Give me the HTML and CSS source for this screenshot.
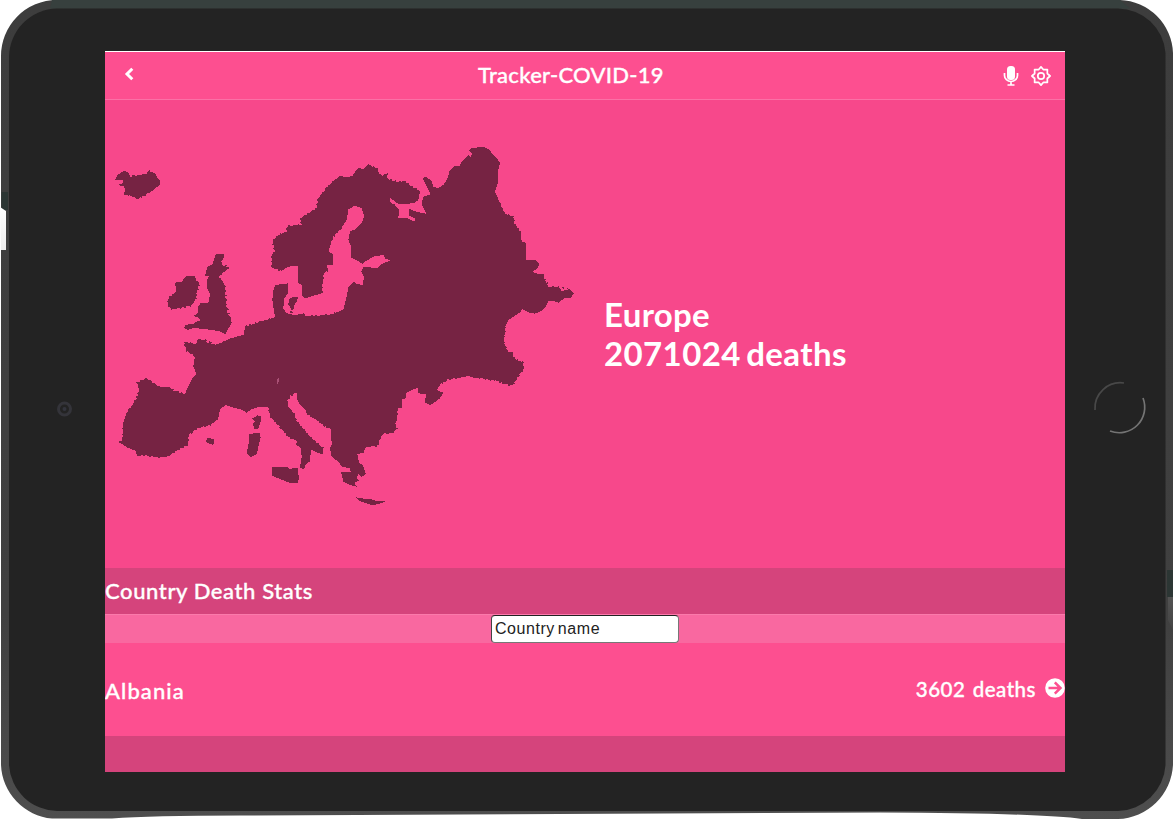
FILE: index.html
```html
<!DOCTYPE html>
<html lang="en">
<head>
<meta charset="utf-8">
<title>Tracker-COVID-19</title>
<link rel="stylesheet" href="styles.css">
</head>
<body>
<div class="device">
  <svg class="bezel" viewBox="0 0 1175 819" aria-hidden="true">
    <defs>
      <linearGradient id="rim" x1="0" y1="0" x2="0" y2="1"><stop offset="0" stop-color="#3d3d3d"/><stop offset=".75" stop-color="#404040"/><stop offset="1" stop-color="#4e4e4e"/></linearGradient>
      <linearGradient id="key" x1="0" y1="0" x2="0" y2="1"><stop offset="0" stop-color="#fff"/><stop offset=".18" stop-color="#ddd"/><stop offset="1" stop-color="#444"/></linearGradient>
    </defs>
    <path fill="url(#rim)" d="M57 0H1120A55 55 0 0 1 1173 53V765A57 57 0 0 1 1118 819H1082Q1040 813 880 812.500L240 815.500Q150 815.500 112 818.500H52A56 56 0 0 1 1 765V57A56 56 0 0 1 57 0Z"/>
    <path fill="#37403e" d="M52 0H1120L1130 8.500H50Z"/>
    <path fill="#2c3634" d="M1.500 192H8V210H1.500Z M1167 570H1173V597H1167Z"/>
    <path fill="url(#key)" d="M0 207L6 211V250H1Z M1168 597H1173V630L1168 620Z"/>
    <path fill="#232323" d="M57 8.500H1118A48 48 0 0 1 1165.500 53V765A49 49 0 0 1 1118 811H57A49 49 0 0 1 9 765V57A49 49 0 0 1 57 8.500Z"/>
    <g fill="none"><circle cx="64.500" cy="409" r="6" stroke="#34343a" stroke-width="3"/><circle cx="64.500" cy="409" r="2" fill="#33343d"/></g>
    <g fill="none" stroke-width="1.700"><path stroke="#484848" d="M1095 410A25.500 25.500 0 0 1 1124 383"/><path stroke="#747474" d="M1110 431A25.500 25.500 0 0 0 1143 398"/></g>
  </svg>
  <main class="screen">
    <header class="topbar">
      <svg class="back" viewBox="0 0 10 14"><path d="M8.300 1.800L3 7l5.300 5.200" fill="none" stroke="#fff" stroke-width="3"/></svg>
      <h1>Tracker-COVID-19</h1>
      <div class="tools">
        <svg class="mic" viewBox="0 0 16 22"><rect x="4" y="1" width="8" height="14" rx="3.500" fill="#fff"/><path d="M1.500 8v2.500a6.500 6 0 0 0 13 0V8M8 16.500V20M4.500 20h7" fill="none" stroke="#fff" stroke-width="1.700"/></svg>
        <svg class="gear" viewBox="0 0 20 20" fill="none" stroke="#fff" stroke-width="1.700" stroke-linejoin="round"><path d="M10 .9L12.500 3.700L16.400 3.600L16.300 7.500L19.100 10L16.300 12.500L16.400 16.400L12.500 16.300L10 19.100L7.500 16.300L3.600 16.400L3.700 12.500L.9 10L3.700 7.500L3.600 3.600L7.500 3.700Z"/><circle cx="10" cy="10" r="3.200"/></svg>
      </div>
    </header>
    <section class="hero">
      <svg class="map" viewBox="0 0 1440 1140" fill="#762343" shape-rendering="crispEdges" role="img" aria-label="Map of Europe">
        <path d="M705 108L725 112 743 107 750 95 763 83 773 88 787 75 797 75 802 82 817 83 822 100 833 108 838 102 850 100 845 113 855 120 885 127 897 123 915 137 945 153 940 180 927 190 880 192 855 173 857 190 868 192 882 210 880 235 908 235 927 245 932 236 912 226 913 207 935 215 965 222 950 193 955 170 977 163 967 143 953 115 963 110 980 123 985 140 1000 145 1017 133 1030 110 1032 95 1050 77 1065 77 1070 65 1090 45 1098 51 1101 39 1090 32 1100 25 1135 20 1150 27 1185 67 1180 90 1178 130 1170 155 1185 190 1200 222 1225 230 1228 250 1248 278 1250 305 1262 308 1263 360 1290 360 1303 373 1297 385 1283 395 1290 400 1313 402 1320 420 1332 443 1360 440 1370 453 1395 447 1407 460 1398 473 1378 475 1360 488 1345 482 1330 483 1322 500 1310 513 1290 521 1270 517 1252 508 1245 517 1230 527 1210 540 1200 560 1197 610 1208 635 1220 637 1228 657 1253 667 1255 687 1235 715 1225 734 1210 734 1175 722 1085 708 1060 713 1027 718 1007 732 995 750 1015 758 1005 775 977 795 960 788 963 762 940 760 938 743 905 757 902 775 890 778 890 800 877 807 875 835 870 855 875 865 865 877 837 880 825 895 817 917 780 922 777 938 757 942 763 970 773 975 783 1002 770 1010 760 1003 755 1015 764 1022 748 1028 755 1040 735 1035 715 1025 708 995 737 997 735 985 710 980 700 965 680 950 675 925 680 915 678 868 655 855 628 835 605 820 600 807 587 797 575 775 577 760 567 758 563 768 555 765 555 776 547 780 550 800 567 820 573 840 605 880 625 900 655 925 655 942 640 940 618 928 615 965 602 972 597 988 585 983 590 950 588 925 577 915 575 903 550 890 520 855 497 832 490 800 465 800 440 808 425 818 405 807 380 802 362 795 345 807 340 835 315 855 280 863 250 885 250 913 235 920 185 950 165 952 115 945 97 947 92 933 65 920 42 908 52 900 55 855 62 825 95 775 103 750 97 728 123 715 165 742 195 742 207 753 240 762 247 745 260 718 275 703 265 680 270 648 245 632 238 607 275 612 278 597 300 600 307 608 330 615 360 605 370 597 417 585 422 560 450 550 495 537 510 532 508 520 502 480 505 450 512 435 550 430 548 460 538 475 535 505 545 520 570 525 597 520 603 530 630 528 680 523 700 515 715 508 725 470 730 443 745 425 755 432 773 435 777 410 768 395 775 382 818 383 830 372 855 362 840 355 835 345 805 350 780 365 773 372 755 360 737 353 738 320 730 300 735 275 750 268 770 250 777 228 770 205 750 197 730 208 725 240 710 262 685 290 675 315 672 335 685 343 683 375 665 375 670 390 655 400 650 460 600 475 590 465 590 435 580 430 580 377 550 380 530 392 500 383 500 345 510 335 503 305 520 285 545 275 548 258 590 255 587 235 635 205 640 175 660 150 685 123Z"/>
        <path d="M31 119L38 105 57 92 69 97 78 112 84 104 92 107 125 101 133 89 138 97 150 98 156 113 165 120 164 134 145 151 130 159 100 176 72 165 55 166 59 158 59 139 41 136 41 132 56 130 54 121Z"/>
        <path d="M332 343H356V353L347 368 352 376 371 382 365 391 350 400 342 411 353 424 360 439 361 470 364 493 366 517 376 532 379 552 366 571 362 582 340 573 300 567 264 564 250 570 238 564 241 555 265 551 277 543 287 541 278 531 264 528 280 519 278 502 286 490 310 488 315 463 307 446 305 422 313 407 300 408 308 378 321 375Z"/>
        <path d="M244 407L270 409 273 421 283 428 276 451 271 480 255 499 230 500 218 505 199 507 188 493 189 477 208 461 216 451 209 432 214 425 230 425Z"/>
        <path d="M553 477L563 472 579 471 575 485 568 495 568 507 560 510 555 500 550 493Z M552 520L558 512 563 518Z"/>
        <path d="M458 826L467 828 467 845 459 867H449L443 852 450 844 440 836Z M433 882L464 878 467 892 461 916 456 942 437 951 426 942 428 922 432 904Z M502 981L545 981 554 986 579 984 578 998 583 1014 577 1030 555 1029 502 1008Z M305 893L317 895 327 899 325 916 314 911 304 906Z"/>
        <path d="M752 1072L777 1076 795 1076 810 1082 843 1083 830 1089 804 1096 785 1090 762 1083Z"/>
        <path fill="#a95075" d="M518 714H521V724L519 731H516Z"/>
        <g fill="none" stroke="#762343" stroke-width="5" stroke-linejoin="miter"><path stroke-dasharray="5 9 8 6 4 13" d="M1200 560L1197 610 1208 635 1220 637 1228 657 1253 667 1255 687 1235 715 1225 734 1210 734 1175 722 1085 708 1060 713 1027 718 1007 732M890 800L877 807 875 835 870 855 875 865 865 877 837 880 825 895 817 917 780 922M165 952L115 945 97 947 92 933 65 920M42 908L52 900 55 855 62 825 95 775 103 750 97 728 123 715 165 742 195 742 207 753 240 762M340 835L315 855 280 863 250 885 250 913 235 920 185 950M590 925L577 915 575 903 550 890 520 855 497 832 490 800M605 820L628 835 655 855 678 868M567 820L573 840 605 880 625 900 655 925M270 648L245 632 238 607 275 612M300 600L330 615 360 605 417 585 422 560 450 550 495 537"/><path stroke-dasharray="6 10 4 8" d="M685 123L660 150 640 175 635 205 587 235 590 255 548 258 545 275 520 285 503 305 510 335 500 345 500 383 530 392M603 530L630 528 680 523 700 515M650 460L655 400 670 390M675 315L685 290 710 262M755 120L787 75 817 83M855 120L885 127 897 123 915 137 945 153M1185 190L1200 222 1225 230 1228 250 1248 278M1313 402L1332 443 1360 440 1395 447M347 368L371 382 350 400 342 411 360 439 364 493 376 532 379 552M230 425L216 451 189 477 188 493 199 507 255 499 271 480 283 428M59 139L59 158 72 165 100 176 145 151"/></g>
      </svg>
      <div class="summary">Europe<br><span class="total">2071024 deaths</span></div>
    </section>
    <h2 class="section-title"><span>Country Death Stats</span></h2>
    <div class="search"><input class="field" placeholder="Country name" aria-label="Country name"></div>
    <div class="row">
      <span class="country">Albania</span>
      <span class="count">3602&nbsp; deaths</span>
      <svg class="go" viewBox="0 0 20 20"><circle cx="10" cy="10" r="9.800" fill="#fff"/><path d="M3.500 10H15.500M9.800 4.300l5.700 5.700-5.700 5.700" fill="none" stroke="#fd4f90" stroke-width="2.500"/></svg>
    </div>
    <div class="row next"></div>
  </main>
</div>
</body>
</html>
```

FILE: styles.css
```css
* { box-sizing: border-box; }
body { margin: 0; background: #fff; color: #fff; font-family: Lato, sans-serif; overflow: hidden; }
.device { position: relative; width: 1175px; height: 819px; padding: 51px 110px 47px 105px; }
.bezel { position: absolute; inset: 0; width: 1175px; height: 819px; }
.screen { position: relative; display: flex; flex-direction: column; width: 960px; height: 721px; overflow: hidden; background: #f7488b; border-top: 1px solid #fff; }
.topbar { flex: none; display: grid; grid-template-columns: 355px 1fr auto; align-items: center; height: 48px; padding: 0 14px 0 18px; background: #fd4f90; border-bottom: 1px solid #fb71a6; }
.back { width: 10px; height: 14px; margin: 0 0 3px 1px; }
h1 { margin: 0 0 2px; font-size: 22px; font-weight: 500; line-height: 28px; letter-spacing: .27px; -webkit-text-stroke: .35px #fff; }
.tools { display: flex; align-items: center; gap: 12px; }
.mic { width: 16px; height: 22px; }
.gear { width: 20px; height: 20px; }
.hero { flex: none; display: flex; align-items: center; height: 468px; }
.map { flex: none; width: 480px; height: 380px; margin-bottom: 8px; }
.summary { padding-left: 19px; font-size: 33px; font-weight: 700; line-height: 39px; letter-spacing: .3px; }
.total { letter-spacing: .4px; word-spacing: -3px; }
.section-title { flex: none; display: flex; align-items: center; margin: 0; height: 46px; padding-bottom: 2px; background: #d5447c; font-size: 22px; font-weight: 500; letter-spacing: .6px; -webkit-text-stroke: .35px #fff; }
.search { flex: none; display: flex; justify-content: center; height: 29px; background: #f968a0; border-top: 1px solid #fb7aab; }
.field { width: 188px; height: 28px; padding: 0 3px; border: 1px solid; border-color: #222 #777 #777 #444; border-radius: 4px; background: #fff; font: 16px "Liberation Sans", sans-serif; letter-spacing: .55px; word-spacing: -2px; }
.field::placeholder { color: #222; opacity: 1; }
.row { flex: none; display: flex; align-items: center; height: 93px; background: #fd4f90; font-size: 22px; font-weight: 500; -webkit-text-stroke: .35px #fff; }
.country { flex: 1; padding-top: 1px; letter-spacing: 1.1px; }
.count { margin: 0 9px 2px 0; font-size: 20.5px; letter-spacing: .5px; word-spacing: -2px; }
.go { width: 20px; height: 20px; margin-bottom: 3px; }
.next { height: 36px; background: #d5447c; }
```
